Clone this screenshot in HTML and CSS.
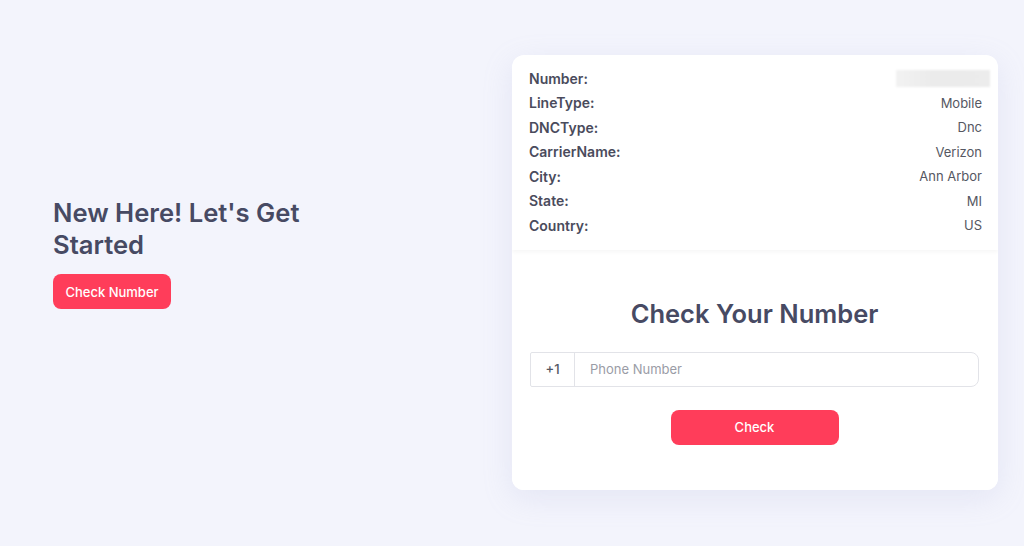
FILE: index.html
```html
<!DOCTYPE html>
<html lang="en">
<head>
<meta charset="utf-8">
<title>Check Your Number</title>
<link rel="stylesheet" href="styles.css">
</head>
<body>
<main class="page">
  <section class="intro">
    <h1 class="intro-title">New Here! Let's Get<br>Started</h1>
    <button class="btn btn-intro">Check Number</button>
  </section>
  <section class="card">
    <div class="info">
      <div class="row"><span class="label">Number:</span><span class="value blurred"></span></div>
      <div class="row"><span class="label">LineType:</span><span class="value">Mobile</span></div>
      <div class="row"><span class="label">DNCType:</span><span class="value">Dnc</span></div>
      <div class="row"><span class="label">CarrierName:</span><span class="value">Verizon</span></div>
      <div class="row"><span class="label">City:</span><span class="value">Ann Arbor</span></div>
      <div class="row"><span class="label">State:</span><span class="value">MI</span></div>
      <div class="row"><span class="label">Country:</span><span class="value">US</span></div>
    </div>
    <div class="form">
      <h2 class="form-title">Check Your Number</h2>
      <div class="input-group">
        <span class="prefix">+1</span>
        <input class="phone" type="text" placeholder="Phone Number">
      </div>
      <button class="btn btn-check">Check</button>
    </div>
  </section>
</main>
</body>
</html>
```

FILE: styles.css
```css
* { box-sizing: border-box; }
html, body { margin: 0; padding: 0; }
body {
  background: #f3f4fc;
  font-family: Inter, "Noto Sans", sans-serif;
  color: #474a5e;
  width: 1024px;
  height: 546px;
  overflow: hidden;
}
.page {
  display: flex;
  align-items: flex-start;
  padding: 55px 26px 0 53px;
}
.intro {
  flex: 1;
  padding-top: 142px;
}
.intro-title {
  margin: 0 0 13px;
  font-size: 25.6px;
  line-height: 32px;
  font-weight: 600;
  color: #474a63;
}
.btn {
  border: none;
  background: #ff3d5a;
  color: #fff;
  font-family: Inter, "Noto Sans", sans-serif;
  font-size: 13px;
  font-weight: 500;
  border-radius: 8px;
  height: 35px;
  cursor: pointer;
}
.btn-intro {
  width: 118px;
  padding: 0;
}
.card {
  width: 486px;
  background: #fff;
  border-radius: 12px;
  box-shadow: 0 8px 30px rgba(160, 165, 210, 0.18);
  overflow: hidden;
}
.info {
  padding: 11px 16px 12px 17px;
  box-shadow: 0 2px 4px rgba(0, 0, 0, 0.04);
  position: relative;
  z-index: 1;
}
.row {
  display: flex;
  justify-content: space-between;
  align-items: center;
  height: 24.5px;
  font-size: 14px;
}
.label {
  font-weight: 600;
  color: #4a4b5c;
}
.value {
  font-weight: 400;
  color: #555762;
  font-size: 13px;
}
.blurred {
  width: 94px;
  height: 17px;
  margin-right: -8px;
  background: linear-gradient(90deg, #f2f2f2, #ebebeb 40%, #ececec);
  filter: blur(1px);
}
.form {
  margin-top: 4px;
  padding: 44px 19px 45px 18px;
  display: flex;
  flex-direction: column;
  align-items: center;
  border-radius: 12px 12px 0 0;
  background: #fff;
}
.form-title {
  margin: 0 0 22px;
  font-size: 25.5px;
  line-height: 32px;
  font-weight: 600;
  color: #474a63;
}
.input-group {
  display: flex;
  width: 100%;
  height: 35px;
  border: 1px solid #e2e3e8;
  border-radius: 2px 8px 8px 2px;
  margin-bottom: 23px;
}
.prefix {
  width: 44px;
  flex: none;
  display: flex;
  align-items: center;
  justify-content: center;
  border-right: 1px solid #e2e3e8;
  font-size: 13px;
  color: #555762;
  font-weight: 500;
}
.phone {
  flex: 1;
  border: none;
  outline: none;
  background: transparent;
  padding: 0 15px;
  font-family: Inter, "Noto Sans", sans-serif;
  font-size: 13px;
  color: #555;
}
.phone::placeholder { color: #9a9ca6; }
.btn-check {
  width: 168px;
}
```
